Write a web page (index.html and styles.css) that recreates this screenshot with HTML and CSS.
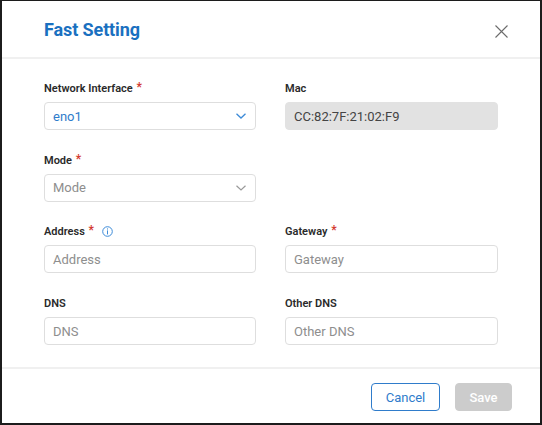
FILE: index.html
```html
<!DOCTYPE html>
<html>
<head>
<meta charset="utf-8">
<link rel="stylesheet" href="styles.css">
</head>
<body>
<div class="dialog">
  <div class="header">
    <h1 class="title">Fast Setting</h1>
    <svg class="close" width="13" height="13" viewBox="0 0 13 13"><path d="M0.5 0.5L12.5 12.5M12.5 0.5L0.5 12.5" stroke="#6b6b6b" stroke-width="1.1" fill="none"/></svg>
  </div>
  <div class="body">
    <div class="field">
      <div class="label">Network Interface <span class="req">*</span></div>
      <div class="input select"><span class="value">eno1</span><svg class="chev" width="10" height="6" viewBox="0 0 10 6"><path d="M0.5 0.8L5 5L9.5 0.8" stroke="#3d8bd8" stroke-width="1.3" fill="none"/></svg></div>
    </div>
    <div class="field">
      <div class="label">Mac</div>
      <div class="input readonly"><span class="text">CC:82:7F:21:02:F9</span></div>
    </div>
    <div class="field">
      <div class="label">Mode <span class="req">*</span></div>
      <div class="input select"><span class="ph">Mode</span><svg class="chev" width="10" height="6" viewBox="0 0 10 6"><path d="M0.5 0.8L5 5L9.5 0.8" stroke="#9a9a9a" stroke-width="1.2" fill="none"/></svg></div>
    </div>
    <div class="field empty"></div>
    <div class="field">
      <div class="label">Address <span class="req">*</span><svg class="info" width="11" height="11" viewBox="0 0 11 11"><circle cx="5.5" cy="5.5" r="4.8" stroke="#3d8bd8" stroke-width="1" fill="none"/><rect x="5" y="2.4" width="1" height="1.1" fill="#3d8bd8"/><rect x="5" y="4.4" width="1" height="4" fill="#3d8bd8"/></svg></div>
      <div class="input"><span class="ph">Address</span></div>
    </div>
    <div class="field">
      <div class="label">Gateway <span class="req">*</span></div>
      <div class="input"><span class="ph">Gateway</span></div>
    </div>
    <div class="field">
      <div class="label">DNS</div>
      <div class="input"><span class="ph">DNS</span></div>
    </div>
    <div class="field">
      <div class="label">Other DNS</div>
      <div class="input"><span class="ph">Other DNS</span></div>
    </div>
  </div>
  <div class="footer">
    <button class="btn cancel">Cancel</button>
    <button class="btn save">Save</button>
  </div>
</div>
</body>
</html>
```
FILE: styles.css
```css
html, body {
  margin: 0;
  padding: 0;
  background: #fff;
}
body {
  font-family: Roboto, "Liberation Sans", sans-serif;
  color: #333;
}
.dialog {
  width: 542px;
  height: 425px;
  box-sizing: border-box;
  border-style: solid;
  border-color: #1c1c1c;
  border-width: 1px 2px 2px 2px;
  display: flex;
  flex-direction: column;
  background: #fff;
}
.header {
  height: 56px;
  flex: none;
  display: flex;
  align-items: center;
  justify-content: space-between;
  padding: 0 32px 0 42px;
  border-bottom: 2px solid #f0f0f0;
}
.title {
  margin: 0;
  font-size: 18px;
  font-weight: 700;
  color: #1a70c0;
  letter-spacing: -0.1px;
}
.close {
  display: block;
  margin-top: 4px;
}
.body {
  flex: 1;
  padding: 21px 42px 0 42px;
  display: grid;
  grid-template-columns: 212px 213px;
  column-gap: 29px;
  row-gap: 21.7px;
  align-content: start;
}
.field {
  display: flex;
  flex-direction: column;
}
.label {
  height: 18px;
  line-height: 18px;
  font-size: 11px;
  font-weight: 600;
  color: #2a2a2a;
  margin-bottom: 4px;
  display: flex;
  align-items: center;
  white-space: pre;
}
.req {
  color: #d33a2f;
  font-size: 12px;
  font-weight: 700;
  position: relative;
  top: -2px;
  margin-left: 1px;
}
.info {
  margin-left: 8px;
  position: relative;
  top: -1px;
}
.input {
  height: 28px;
  box-sizing: border-box;
  border: 1px solid #dedede;
  border-radius: 4px;
  display: flex;
  align-items: center;
  justify-content: space-between;
  padding: 0 9px 0 8px;
  font-size: 13px;
}
.input.readonly {
  background: #e2e2e2;
  border-color: #e2e2e2;
}
.value {
  color: #2f7ccb;
}
.text {
  color: #444;
}
.ph {
  color: #8e8e8e;
}
.chev {
  display: block;
}
.footer {
  height: 56px;
  box-sizing: border-box;
  flex: none;
  border-top: 2px solid #f0f0f0;
  display: flex;
  justify-content: flex-end;
  align-items: flex-start;
  padding: 14px 28px 0 0;
  gap: 15px;
}
.btn {
  height: 28px;
  box-sizing: border-box;
  border-radius: 4px;
  font-family: Roboto, "Liberation Sans", sans-serif;
  font-size: 13px;
  padding: 0;
}
.cancel {
  width: 69px;
  background: #fff;
  border: 1px solid #2f7ccb;
  color: #2f7ccb;
}
.save {
  width: 57px;
  background: #cccccc;
  border: 1px solid #cccccc;
  color: #fff;
  font-weight: 500;
}
```
